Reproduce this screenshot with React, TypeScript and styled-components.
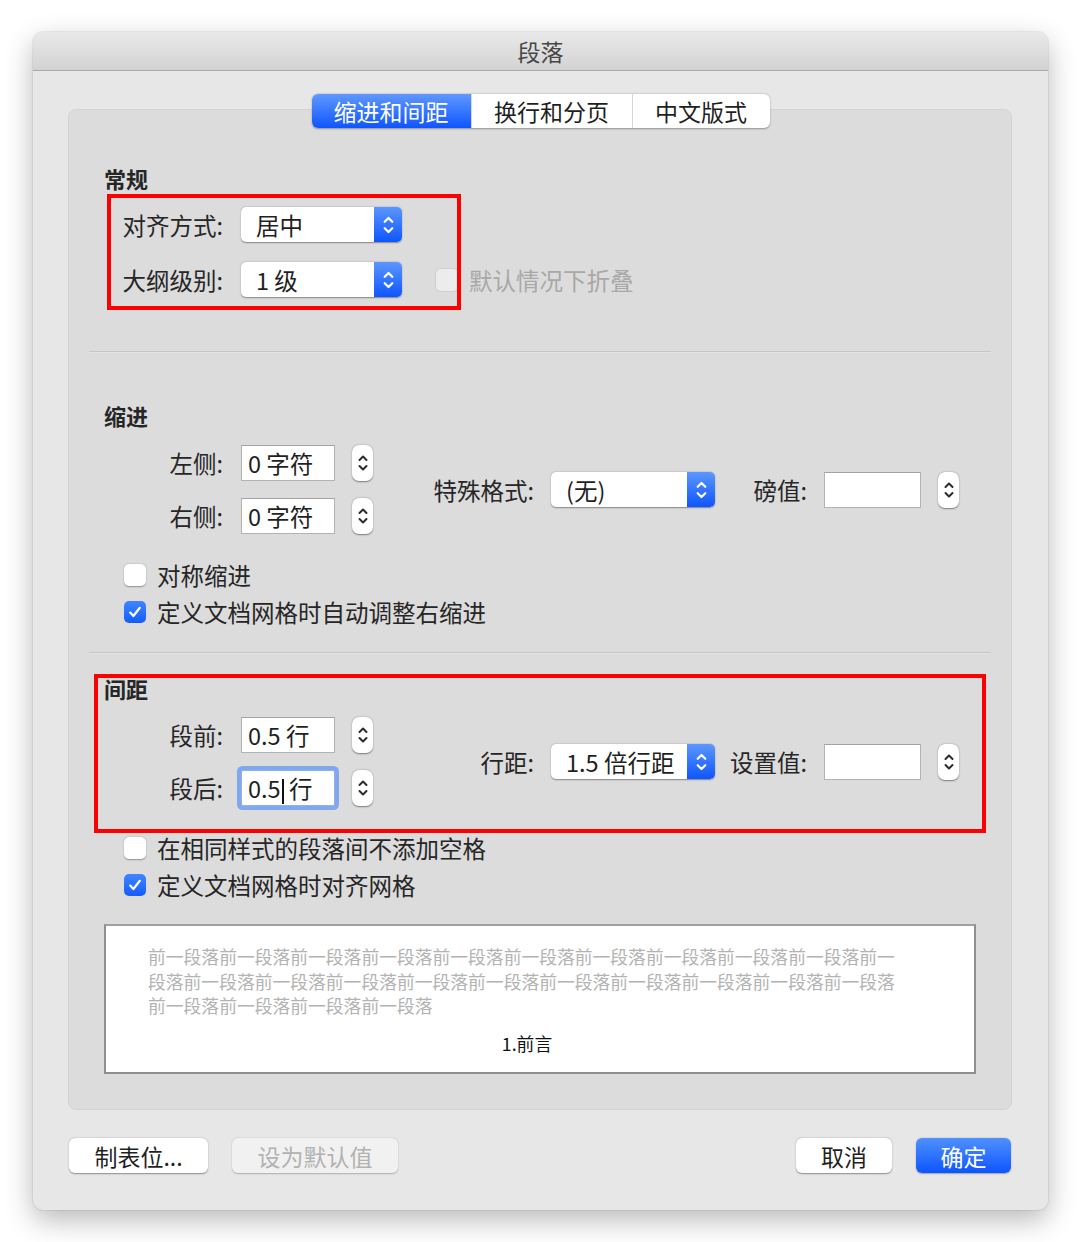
import * as React from "react";
import styled, { createGlobalStyle, css } from "styled-components";

const GlobalStyle = createGlobalStyle`
  html, body {
    margin: 0;
    padding: 0;
    background: #ffffff;
  }
  body {
    font-family: "Noto Sans CJK SC", "Noto Sans", sans-serif;
    color: #262626;
  }
`;

const Page = styled.div`
  padding: 32px 32px 32px 33px;
  width: 1015px;
`;

const Window = styled.div`
  width: 1015px;
  border-radius: 10px;
  overflow: hidden;
  background: #e7e7e7;
  box-shadow: 0 10px 28px rgba(0, 0, 0, 0.28), 0 0 0 1px rgba(0, 0, 0, 0.06);
`;

const TitleBar = styled.div`
  height: 38px;
  display: flex;
  align-items: center;
  justify-content: center;
  background: linear-gradient(#e9e9e9, #d3d3d3);
  border-bottom: 1px solid #a9a9a9;
  font-size: 23px;
  color: #474747;
`;

const Body = styled.div`
  padding: 23px 36px 37px 35px;
`;

const TabBar = styled.div`
  position: relative;
  z-index: 1;
  display: flex;
  justify-content: center;
  margin-bottom: -19px;
`;

const Tabs = styled.div`
  display: flex;
  height: 34px;
  border-radius: 6px;
  overflow: hidden;
  background: #ffffff;
  box-shadow: 0 0.5px 2px rgba(0, 0, 0, 0.35);
  margin-left: 1px;
`;

const Tab = styled.div<{ $active?: boolean; $width: number }>`
  width: ${(p) => p.$width}px;
  display: flex;
  align-items: center;
  justify-content: center;
  font-size: 23px;
  color: #1f1f1f;
  & + & {
    border-left: 1px solid #d6d6d6;
  }
  ${(p) =>
    p.$active &&
    css`
      color: #ffffff;
      background: linear-gradient(#5f98ff, #0f55ff);
    `}
`;

const Panel = styled.div`
  position: relative;
  background: #dcdcdc;
  border: 1px solid #d3d3d3;
  border-radius: 8px;
  padding: 55px 35px 35px 35px;
`;

const SectionTitle = styled.div<{ $top?: number }>`
  font-size: 22px;
  line-height: 26px;
  height: 26px;
  font-weight: 700;
  color: #262626;
  margin-top: ${(p) => p.$top ?? 0}px;
`;

const Separator = styled.div<{ $top: number }>`
  height: 1px;
  background: #c6c6c6;
  box-shadow: 0 1px 0 #e4e4e4;
  margin: ${(p) => p.$top}px -15px 0 -15px;
`;

const Rows = styled.div<{ $top: number; $gap: number }>`
  display: flex;
  flex-direction: column;
  gap: ${(p) => p.$gap}px;
  margin-top: ${(p) => p.$top}px;
`;

const FieldRow = styled.div<{ $height?: number }>`
  display: flex;
  align-items: center;
  height: ${(p) => p.$height ?? 36}px;
`;

const Label = styled.div<{ $width: number; $gap: number }>`
  width: ${(p) => p.$width}px;
  margin-right: ${(p) => p.$gap}px;
  text-align: right;
  font-size: 23.5px;
  white-space: nowrap;
  color: #262626;
`;

const PopUp = styled.div<{ $width: number }>`
  position: relative;
  width: ${(p) => p.$width}px;
  height: 35px;
  display: flex;
  border-radius: 5px;
  overflow: hidden;
  background: #ffffff;
  box-shadow: 0 0.5px 1.5px rgba(0, 0, 0, 0.4);
`;

const PopUpValue = styled.div`
  flex: 1;
  display: flex;
  align-items: center;
  padding-left: 15px;
  font-size: 23.5px;
  color: #1f1f1f;
  white-space: nowrap;
`;

const PopUpArrow = styled.div`
  width: 28px;
  display: flex;
  align-items: center;
  justify-content: center;
  background: linear-gradient(#5b97ff, #0f55ff);
`;

const TextField = styled.div<{ $width: number; $focused?: boolean }>`
  width: ${(p) => p.$width}px;
  height: 36px;
  box-sizing: border-box;
  display: flex;
  align-items: center;
  padding-left: 6px;
  background: #ffffff;
  border: 1px solid #b3b3b3;
  border-top-color: #a3a3a3;
  font-size: 23.5px;
  color: #1f1f1f;
  white-space: pre;
  ${(p) =>
    p.$focused &&
    css`
      border-color: #8fb2ee;
      box-shadow: 0 0 0 4px #7fa8ee;
      border-radius: 2px;
    `}
`;

const Caret = styled.span`
  display: inline-block;
  width: 2px;
  height: 25px;
  background: #111;
  vertical-align: middle;
  margin-left: 1px;
`;

const Stepper = styled.div<{ $left: number }>`
  width: 21px;
  height: 36px;
  box-sizing: border-box;
  margin-left: ${(p) => p.$left}px;
  display: flex;
  align-items: center;
  justify-content: center;
  background: #ffffff;
  border-radius: 7px;
  box-shadow: 0 0.5px 1.5px rgba(0, 0, 0, 0.45);
`;

const CheckList = styled.div<{ $top: number }>`
  display: flex;
  flex-direction: column;
  gap: 13px;
  margin-top: ${(p) => p.$top}px;
  padding-left: 20px;
`;

const CheckRow = styled.div<{ $left?: number }>`
  display: flex;
  align-items: center;
  height: 24px;
  margin-left: ${(p) => p.$left ?? 0}px;
`;

const Box = styled.div<{ $checked?: boolean; $disabled?: boolean }>`
  width: 22px;
  height: 22px;
  box-sizing: border-box;
  border-radius: 5px;
  display: flex;
  align-items: center;
  justify-content: center;
  background: #ffffff;
  box-shadow: 0 0.5px 1.5px rgba(0, 0, 0, 0.35);
  ${(p) =>
    p.$checked &&
    css`
      background: linear-gradient(#3f86ff, #145cff);
      box-shadow: none;
    `}
  ${(p) =>
    p.$disabled &&
    css`
      background: #ececec;
      box-shadow: 0 0 0 1px #cfcfcf;
    `}
`;

const CheckLabel = styled.span<{ $disabled?: boolean }>`
  margin-left: 11px;
  font-size: 23.5px;
  color: ${(p) => (p.$disabled ? "#a8a8a8" : "#262626")};
  white-space: nowrap;
`;

const SplitBlock = styled.div<{ $top: number }>`
  display: flex;
  align-items: center;
  margin-top: ${(p) => p.$top}px;
`;

const Preview = styled.div`
  margin-top: 27px;
  height: 150px;
  box-sizing: border-box;
  background: #ffffff;
  border: 2px solid #8e8e8e;
  border-top-color: #a0a0a0;
  padding: 18px 0 0 42px;
`;

const PreviewText = styled.div`
  width: 752px;
  font-size: 17.8px;
  line-height: 24.5px;
  color: #b3b3b3;
  word-break: break-all;
`;

const PreviewHeading = styled.div`
  margin-top: 13px;
  width: 758px;
  text-align: center;
  font-size: 17.8px;
  line-height: 24px;
  color: #111;
`;

const Footer = styled.div`
  display: flex;
  align-items: center;
  margin-top: 28px;
  padding: 0 1px;
  gap: 24px;
`;

const Spacer = styled.div`
  flex: 1;
`;

const Button = styled.div<{ $width: number; $variant?: "default" | "primary" | "disabled" }>`
  width: ${(p) => p.$width}px;
  height: 35px;
  display: flex;
  align-items: center;
  justify-content: center;
  border-radius: 6px;
  font-size: 23px;
  color: #1f1f1f;
  background: #ffffff;
  box-shadow: 0 0.5px 1.5px rgba(0, 0, 0, 0.4);
  ${(p) =>
    p.$variant === "primary" &&
    css`
      color: #ffffff;
      background: linear-gradient(#4f91ff, #0e54ff);
      box-shadow: 0 0.5px 1.5px rgba(0, 0, 0, 0.3);
    `}
  ${(p) =>
    p.$variant === "disabled" &&
    css`
      color: #b2b2b2;
      background: #f1f1f1;
      box-shadow: 0 0.5px 1.5px rgba(0, 0, 0, 0.25);
    `}
`;

const Highlight = styled.div<{ $left: number; $top: number; $width: number; $height: number }>`
  position: absolute;
  left: ${(p) => p.$left}px;
  top: ${(p) => p.$top}px;
  width: ${(p) => p.$width}px;
  height: ${(p) => p.$height}px;
  box-sizing: border-box;
  border: 4px solid #ff0000;
  pointer-events: none;
`;

const Chevrons = ({ color, w, h }: { color: string; w: number; h: number }) => (
  <svg width={w} height={h} viewBox="0 0 12 22" fill="none">
    <path d="M2.5 8 L6 4.5 L9.5 8" stroke={color} strokeWidth="2" strokeLinecap="round" strokeLinejoin="round" />
    <path d="M2.5 14 L6 17.5 L9.5 14" stroke={color} strokeWidth="2" strokeLinecap="round" strokeLinejoin="round" />
  </svg>
);

const Check = () => (
  <svg width="16" height="16" viewBox="0 0 16 16" fill="none">
    <path d="M3.2 8.6 L6.4 12 L12.8 3.8" stroke="#fff" strokeWidth="2.2" strokeLinecap="round" strokeLinejoin="round" />
  </svg>
);

const Select = ({ value, width }: { value: string; width: number }) => (
  <PopUp $width={width}>
    <PopUpValue>{value}</PopUpValue>
    <PopUpArrow>
      <Chevrons color="#ffffff" w={13} h={24} />
    </PopUpArrow>
  </PopUp>
);

const Spin = ({ left }: { left: number }) => (
  <Stepper $left={left}>
    <Chevrons color="#2b2b2b" w={12} h={24} />
  </Stepper>
);

const CheckItem = ({ label, checked, disabled, left }: { label: string; checked?: boolean; disabled?: boolean; left?: number }) => (
  <CheckRow $left={left}>
    <Box $checked={checked} $disabled={disabled}>{checked && <Check />}</Box>
    <CheckLabel $disabled={disabled}>{label}</CheckLabel>
  </CheckRow>
);

const previewText = "前一段落".repeat(25);

const App = () => {
  return (
    <Page>
      <GlobalStyle />
      <Window>
        <TitleBar>段落</TitleBar>
        <Body>
          <TabBar>
            <Tabs>
              <Tab $active $width={159}>缩进和间距</Tab>
              <Tab $width={160}>换行和分页</Tab>
              <Tab $width={137}>中文版式</Tab>
            </Tabs>
          </TabBar>
          <Panel>
            <SectionTitle>常规</SectionTitle>
            <Rows $top={16} $gap={20}>
              <FieldRow $height={35}>
                <Label $width={119} $gap={18}>对齐方式:</Label>
                <Select value="居中" width={161} />
              </FieldRow>
              <FieldRow $height={35}>
                <Label $width={119} $gap={18}>大纲级别:</Label>
                <Select value="1 级" width={161} />
                <CheckItem label="默认情况下折叠" disabled left={34} />
              </FieldRow>
            </Rows>

            <Separator $top={54} />

            <SectionTitle $top={50}>缩进</SectionTitle>
            <SplitBlock $top={17}>
              <Rows $top={0} $gap={17}>
                <FieldRow>
                  <Label $width={119} $gap={18}>左侧:</Label>
                  <TextField $width={94}>0 字符</TextField>
                  <Spin left={17} />
                </FieldRow>
                <FieldRow>
                  <Label $width={119} $gap={18}>右侧:</Label>
                  <TextField $width={94}>0 字符</TextField>
                  <Spin left={17} />
                </FieldRow>
              </Rows>
              <FieldRow>
                <Label $width={161} $gap={17}>特殊格式:</Label>
                <Select value="(无)" width={164} />
                <Label $width={92} $gap={17}>磅值:</Label>
                <TextField $width={97}></TextField>
                <Spin left={17} />
              </FieldRow>
            </SplitBlock>
            <CheckList $top={29}>
              <CheckItem label="对称缩进" />
              <CheckItem label="定义文档网格时自动调整右缩进" checked />
            </CheckList>

            <Separator $top={28} />

            <SectionTitle $top={22}>间距</SectionTitle>
            <SplitBlock $top={16}>
              <Rows $top={0} $gap={17}>
                <FieldRow>
                  <Label $width={119} $gap={18}>段前:</Label>
                  <TextField $width={94}>0.5 行</TextField>
                  <Spin left={17} />
                </FieldRow>
                <FieldRow>
                  <Label $width={119} $gap={18}>段后:</Label>
                  <TextField $width={94} $focused>
                    <span>
                      0.5<Caret />{" 行"}
                    </span>
                  </TextField>
                  <Spin left={17} />
                </FieldRow>
              </Rows>
              <FieldRow>
                <Label $width={161} $gap={17}>行距:</Label>
                <Select value="1.5 倍行距" width={164} />
                <Label $width={92} $gap={17}>设置值:</Label>
                <TextField $width={97}></TextField>
                <Spin left={17} />
              </FieldRow>
            </SplitBlock>
            <CheckList $top={30}>
              <CheckItem label="在相同样式的段落间不添加空格" />
              <CheckItem label="定义文档网格时对齐网格" checked />
            </CheckList>

            <Preview>
              <PreviewText>{previewText}</PreviewText>
              <PreviewHeading>1.前言</PreviewHeading>
            </Preview>

            <Highlight $left={38} $top={84} $width={354} $height={116} />
            <Highlight $left={25} $top={564} $width={892} $height={159} />
          </Panel>

          <Footer>
            <Button $width={139}>制表位...</Button>
            <Button $width={166} $variant="disabled">设为默认值</Button>
            <Spacer />
            <Button $width={96}>取消</Button>
            <Button $width={95} $variant="primary">确定</Button>
          </Footer>
        </Body>
      </Window>
    </Page>
  );
};

export default App;
